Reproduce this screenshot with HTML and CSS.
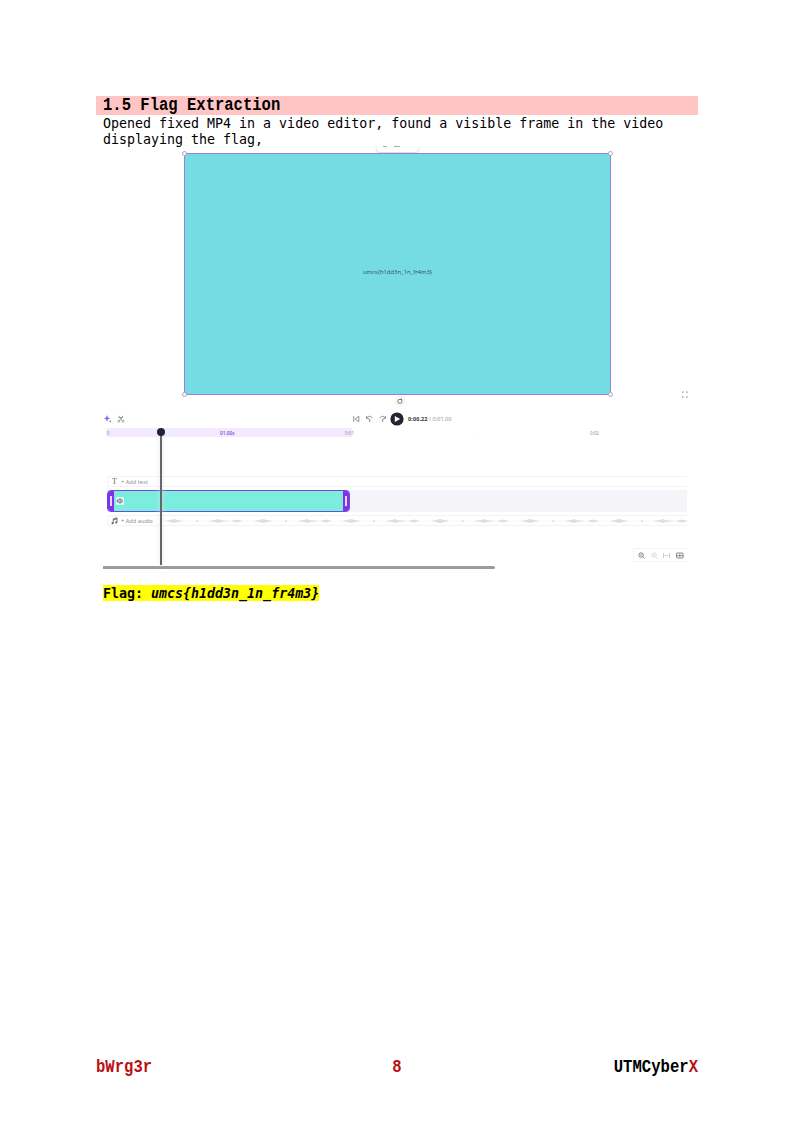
FILE: index.html
```html
<!DOCTYPE html>
<html lang="en">
<head>
<meta charset="utf-8">
<title>Flag Extraction</title>
<link rel="stylesheet" href="styles.css">
</head>
<body>
<main class="page">
  <h2 class="heading"><span>1.5 Flag Extraction</span></h2>
  <p class="intro">Opened fixed MP4 in a video editor, found a visible frame in the video<br>displaying the flag,</p>
  <section class="editor">
    <div class="stage">
      <div class="toolbar-tip"><svg width="40" height="6"><path d="M6 .5h4M17 .5h6" stroke="#aaa"/></svg></div>
      <div class="preview">
        <span>umcs{h1dd3n_1n_fr4m3}</span>
        <i class="handle tl"></i><i class="handle tr"></i><i class="handle bl"></i><i class="handle br"></i>
      </div>
      <svg class="rotate" width="8" height="8" viewBox="0 0 8 8"><path d="M5.8 2.5H3a1 1 0 0 0-1 1v1.7a1 1 0 0 0 1 1h1.8a1 1 0 0 0 1-1V2.5M4.8 1.4 6 2.5" fill="none" stroke="#555" stroke-width=".8"/></svg>
      <svg class="expand" width="6" height="7" viewBox="0 0 6 7"><path d="M.5 2V.8h1.3M4 .8h1.3V2M.5 5v1.3h1.3M4 6.3h1.3V5" fill="none" stroke="#999" stroke-width=".8"/></svg>
    </div>
    <div class="controls">
      <div class="tools">
        <svg width="8" height="8" viewBox="0 0 8 8"><path d="M3 0 4 2.5 6.2 3.4 4 4.3 3 6.7 2 4.3 0 3.4 2 2.5zM6.2 5l.5 1 .9.4-.9.4-.5 1-.5-1-.8-.4.8-.4z" fill="#8b6be8"/></svg>
        <svg width="8" height="8" viewBox="0 0 8 8"><path d="M1.7.8 5.2 5.5M6 .8 2.5 5.5M1.5 2.5h4.5" fill="none" stroke="#888" stroke-width=".8"/><circle cx="1.8" cy="6.2" r="1" fill="none" stroke="#888" stroke-width=".7"/><circle cx="6" cy="6.2" r="1" fill="none" stroke="#888" stroke-width=".7"/></svg>
      </div>
      <div class="playback">
        <svg width="7" height="8" viewBox="0 0 7 8"><path d="M.7 1v6M5.8 1.2v5.6L2 4z" fill="none" stroke="#777" stroke-width=".8"/></svg>
        <svg width="7" height="8" viewBox="0 0 7 8"><path d="M.7 3.3C1.4.8 5.2.5 6.1 3.2M.6 1v2.4H3M2.7 4.7h1.5L3.4 7" fill="none" stroke="#777" stroke-width=".8"/></svg>
        <svg width="7" height="8" viewBox="0 0 7 8"><path d="M6.3 3.3C5.6.8 1.8.5.9 3.2M6.4 1v2.4H4M2.7 4.7h1.5L3.4 7" fill="none" stroke="#777" stroke-width=".8"/></svg>
        <svg class="play" width="14" height="14" viewBox="0 0 14 14"><circle cx="7" cy="7" r="6.6" fill="#252432"/><path d="M4.8 3.9v6.2L10.2 7z" fill="#fff"/></svg>
        <span class="time"><b>0:00.22</b> / 0:01.00</span>
      </div>
    </div>
    <div class="ruler">
      <div class="range"><span>0</span><span class="duration">01.00s</span><span>0:01</span></div>
      <span class="tick">·</span><span class="second">0:02</span>
    </div>
    <div class="track label-track"><b class="type">T</b><span>+ Add text</span></div>
    <div class="track video-track">
      <div class="clip">
        <i class="grip"></i>
        <svg class="sound" width="8" height="8" viewBox="0 0 8 8"><rect width="8" height="8" rx="1.5" fill="#e8faf7"/><path d="M1.3 3v2h1.2l1.7 1.3V1.7L2.5 3zM5.6 2.2q1.4 1.8 0 3.6" fill="none" stroke="#39545a" stroke-width=".8"/></svg>
        <i class="grip right"></i>
      </div>
    </div>
    <div class="track label-track audio">
      <svg class="note" width="7" height="8" viewBox="0 0 7 8"><path d="M2.3 6V1.7l3.7-.9v4.4M2.3 2.9 6 2" fill="none" stroke="#555" stroke-width=".8"/><circle cx="1.5" cy="6.2" r="1" fill="#555"/><circle cx="5.2" cy="5.4" r="1" fill="#555"/></svg>
      <span>+ Add audio</span>
      <svg class="wave" width="524" height="8" viewBox="163 0 524 8">
        <defs><g id="beat" fill="#dedee0"><path d="M-9 4-4 3 0 2 4 3 10 4 4 5 0 6-4 5zM22 3.3h2v1.4h-2zM34 4l7-1 3-1 3 1.2L56 4l-9 1-3 1-3-1zM57 4l6-1.4L69 4l-6 1.4z"/></g></defs>
        <path d="M163 4h524" stroke="#f2f2f3" stroke-width=".6"/>
        <use href="#beat" x="174"/><use href="#beat" x="263"/><use href="#beat" x="351"/><use href="#beat" x="440"/><use href="#beat" x="530"/><use href="#beat" x="619"/>
      </svg>
    </div>
    <div class="zoombar">
      <svg width="7" height="7" viewBox="0 0 7 7"><path d="M5 5l1.6 1.6M2 3h2.2" stroke="#777" stroke-width=".8"/><circle cx="3.1" cy="3" r="2.2" fill="none" stroke="#666" stroke-width=".8"/></svg>
      <svg width="7" height="7" viewBox="0 0 7 7"><path d="M5 5l1.6 1.6M2 3h2.2" stroke="#d0d0d0" stroke-width=".8"/><circle cx="3.1" cy="3" r="2.2" fill="none" stroke="#d0d0d0" stroke-width=".8"/></svg>
      <svg width="7" height="7" viewBox="0 0 7 7"><path d="M.5 1v5M6.5 1v5M1.5 3.5h4" stroke="#c4c4c4" stroke-width=".8" fill="none"/></svg>
      <svg width="8" height="7" viewBox="0 0 8 7"><rect x=".5" y="1" width="6.6" height="5" rx=".8" fill="none" stroke="#666" stroke-width=".8"/><path d="M3.8 2v3M1 3.7h6" stroke="#666" stroke-width=".7"/></svg>
    </div>
    <div class="scrollbar"></div>
    <div class="playhead"></div>
  </section>
  <p class="flag"><mark>Flag: <em>umcs{h1dd3n_1n_fr4m3}</em></mark></p>
  <footer class="footer"><span class="red">bWrg3r</span><span class="red number">8</span><span class="team">UTMCyber<span class="x">X</span></span></footer>
</main>
</body>
</html>
```

FILE: styles.css
```css
* { box-sizing: border-box; }
body { margin: 0; background: #fff; }
svg { display: block; flex: none; }
.page { height: 1123px; padding: 96px 96px 0; display: flex; flex-direction: column; font-family: "DejaVu Sans Mono", monospace; font-size: 13.3px; color: #000; }
.heading { margin: 0; height: 19px; flex: none; background: #ffc5c5; padding-left: 7px; font: bold 15.55px/18px "Liberation Mono", monospace; }
.heading span { display: inline-block; transform: scaleY(1.16); }
.intro { margin: 0; height: 31px; padding: 1px 0 0 7px; line-height: 16px; white-space: nowrap; }
.editor { position: relative; width: 584px; height: 423px; margin-left: 7px; flex: none; display: flex; flex-direction: column; font-family: "Open Sans", sans-serif; color: #888; }
.stage { position: relative; height: 264px; padding: 7px 0 0 81px; flex: none; }
.toolbar-tip { position: absolute; left: 274px; top: 0; width: 41px; height: 6px; border-radius: 0 0 3px 3px; box-shadow: 0 1px 3px #ccc; clip-path: inset(0 -4px -4px); }
.preview { position: relative; width: 427px; height: 242px; border: 1.5px solid #9b7edb; background: #74dce2; display: flex; align-items: center; justify-content: center; color: #294f59; }
.preview span { padding-bottom: 4px; font-size: 5.9px; }
.handle { position: absolute; width: 5px; height: 5px; border: 1px solid #aaa4b8; border-radius: 50%; background: #fff; }
.tl { left: -3px; top: -3px; }
.tr { right: -3px; top: -3px; }
.bl { left: -3px; bottom: -3px; }
.br { right: -3px; bottom: -3px; }
.rotate { position: absolute; left: 293px; top: 251px; border-radius: 50%; box-shadow: 0 0 2px #ccc; }
.expand { position: absolute; left: 579px; top: 245px; }
.controls { height: 18px; padding-bottom: 1px; flex: none; display: flex; align-items: center; }
.tools { width: 250px; display: flex; gap: 5px; padding-left: 1px; }
.playback { display: flex; align-items: center; gap: 6px; }
.play { margin-left: -2px; }
.time { margin-left: -2px; font-size: 5.5px; letter-spacing: .04px; white-space: nowrap; }
.time b { color: #333; letter-spacing: .1px; }
.ruler { height: 9px; flex: none; display: flex; align-items: center; font-size: 4.5px; line-height: 8px; margin-bottom: 39px; }
.range { width: 246px; height: 9px; margin-left: 3px; padding: 0 0 0 1px; border-radius: 3px 0 0 3px; background: #f3eafd; display: flex; align-items: center; justify-content: space-between; }
.range span:last-child { margin-right: -2px; }
.range .duration { color: #8446e2; font-size: 4.8px; font-weight: 600; }
.tick { width: 238px; padding-left: 121px; color: #bbb; }
.track { margin-left: 4px; flex: none; display: flex; align-items: center; }
.label-track { height: 11px; border: 1px solid #f3f3f5; border-right: 0; border-radius: 3px 0 0 3px; font-size: 5.7px; line-height: 8px; padding-left: 4px; gap: 4px; }
.type { width: 5px; font: 8px/8px "Liberation Serif", serif; color: #666; }
.video-track { height: 22px; margin: 3px 0 3px 4px; background: #f5f4f9; }
.clip { width: 243px; height: 22px; background: #7aeddd; border: 1px solid #7148d8; border-radius: 4px; display: flex; align-items: center; overflow: hidden; }
.grip { width: 6px; height: 100%; flex: none; background: #8130ed; display: flex; align-items: center; justify-content: center; }
.grip::after { content: ""; width: 1.5px; height: 10px; background: #e7d4fc; }
.sound { margin-left: 2px; }
.right { margin-left: auto; }
.audio { position: relative; padding-left: 3px; gap: 3px; }
.wave { position: absolute; left: 55px; top: 1px; }
.zoombar { width: 54px; height: 14px; margin: 22px 0 0 auto; padding: 0 3px 0 4px; flex: none; border: 1px solid #f4f4f4; border-right: 0; border-radius: 2px; display: flex; align-items: center; justify-content: space-between; }
.scrollbar { width: 392px; height: 3px; margin-top: auto; flex: none; border-radius: 0 2px 2px 0; background: #9b9b9b; }
.playhead { position: absolute; left: 57px; top: 286px; width: 2px; height: 133px; background: #66656a; box-shadow: 0 0 5px #ddd; }
.playhead::before { content: ""; position: absolute; left: -3px; top: -4px; width: 8px; height: 8px; border-radius: 50%; background: #242333; }
.flag { margin: 16px 0 0 7px; height: 17px; line-height: 17px; font-weight: bold; }
.flag mark { display: inline-block; height: 16px; line-height: 18px; background: #ff0; color: #000; }
.footer { margin: auto 0 46px; display: grid; grid-template-columns: 1fr auto 1fr; font: bold 15.6px/20px "Liberation Mono", monospace; transform: scaleY(1.14); }
.red, .x { color: #b91015; }
.team { text-align: right; }
```
